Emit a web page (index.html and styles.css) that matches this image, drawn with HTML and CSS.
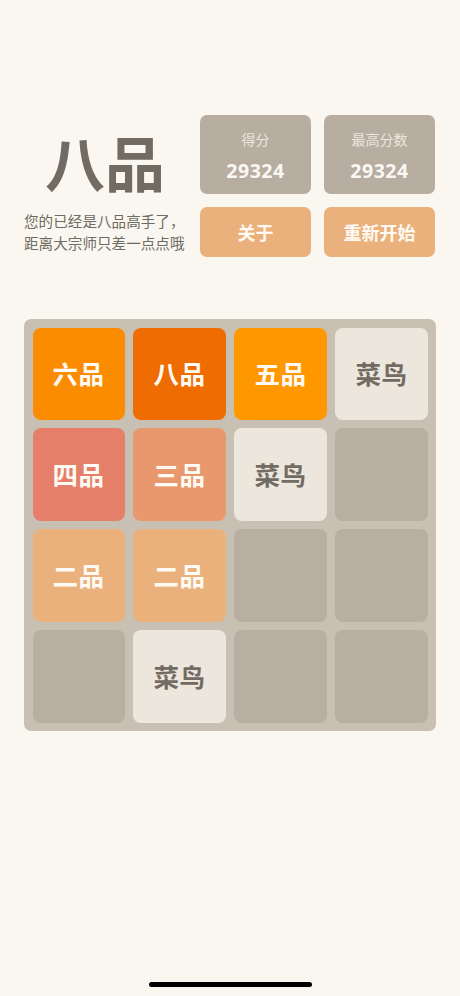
FILE: index.html
```html
<!DOCTYPE html>
<html lang="zh">
<head>
<meta charset="utf-8">
<title>八品</title>
<link rel="stylesheet" href="styles.css">
</head>
<body>
<div class="screen">
  <header class="header">
    <div class="intro">
      <h1 class="title">八品</h1>
      <p class="subtitle">您的已经是八品高手了，<br>距离大宗师只差一点点哦</p>
    </div>
    <div class="panel">
      <div class="score-box"><span class="score-label">得分</span><span class="score-value">29324</span></div>
      <div class="score-box"><span class="score-label">最高分数</span><span class="score-value">29324</span></div>
      <div class="btn">关于</div>
      <div class="btn">重新开始</div>
    </div>
  </header>
  <main class="board">
    <div class="tile t6">六品</div>
    <div class="tile t8">八品</div>
    <div class="tile t5">五品</div>
    <div class="tile t1">菜鸟</div>
    <div class="tile t4">四品</div>
    <div class="tile t3">三品</div>
    <div class="tile t1">菜鸟</div>
    <div class="tile empty"></div>
    <div class="tile t2">二品</div>
    <div class="tile t2">二品</div>
    <div class="tile empty"></div>
    <div class="tile empty"></div>
    <div class="tile empty"></div>
    <div class="tile t1">菜鸟</div>
    <div class="tile empty"></div>
    <div class="tile empty"></div>
  </main>
  <div class="spacer"></div>
  <div class="home-indicator"></div>
</div>
</body>
</html>
```

FILE: styles.css
```css
* { box-sizing: border-box; }
html, body {
  margin: 0;
  padding: 0;
  background: #f9f7ef;
}
body {
  font-family: "Noto Sans CJK SC", "Noto Sans", sans-serif;
  color: #6f6a62;
}
.screen {
  width: 460px;
  height: 996px;
  display: flex;
  flex-direction: column;
  padding: 115px 24px 0 24px;
}
.header {
  display: flex;
  align-items: flex-start;
}
.intro {
  width: 176px;
  display: flex;
  flex-direction: column;
  align-items: flex-start;
}
.title {
  margin: 4px 0 0 0;
  width: 162px;
  text-align: center;
  font-size: 60px;
  line-height: 84px;
  font-weight: 700;
  color: #716b63;
  letter-spacing: 0px;
}
.subtitle {
  margin: 7px 0 0 0;
  font-size: 14.6px;
  line-height: 22px;
  color: #6f6a62;
  white-space: nowrap;
}
.panel {
  display: grid;
  grid-template-columns: 111px 111px;
  grid-template-rows: 79px 50px;
  column-gap: 13px;
  row-gap: 13px;
}
.score-box {
  background: #b8ada1;
  border-radius: 7px;
  display: flex;
  flex-direction: column;
  align-items: center;
  padding-top: 12px;
}
.score-label {
  font-size: 14px;
  line-height: 24px;
  color: #ece6dc;
}
.score-value {
  margin-top: 8px;
  font-family: "Noto Sans", "Open Sans", sans-serif;
  font-size: 19.5px;
  line-height: 24px;
  font-weight: 700;
  color: #fbf8f3;
  letter-spacing: 0.5px;
}
.btn {
  background: #ebb17d;
  border-radius: 7px;
  display: flex;
  align-items: center;
  justify-content: center;
  font-size: 18px;
  font-weight: 700;
  color: #fffaf3;
}
.board {
  margin-top: 62px;
  width: 412px;
  height: 412px;
  background: #c9c0b4;
  border-radius: 7px;
  padding: 8.5px;
  display: grid;
  grid-template-columns: repeat(4, 1fr);
  grid-template-rows: repeat(4, 1fr);
  gap: 8.8px;
}
.tile {
  border-radius: 8px;
  display: flex;
  align-items: center;
  justify-content: center;
  font-size: 25.5px;
  font-weight: 700;
  color: #fffaf3;
  letter-spacing: 0.5px;
  padding-bottom: 2px;
}
.empty { background: #b8aea2; }
.t1 { background: #ece6dd; color: #716b63; }
.t2 { background: #ebb17d; }
.t3 { background: #e8986c; }
.t4 { background: #e57f6a; }
.t5 { background: #ff9800; }
.t6 { background: #fb8c00; }
.t8 { background: #ef6c00; }
.spacer { flex: 1; }
.home-indicator {
  align-self: center;
  width: 163px;
  height: 5px;
  border-radius: 3px;
  background: #000;
  margin-bottom: 9px;
}
```
